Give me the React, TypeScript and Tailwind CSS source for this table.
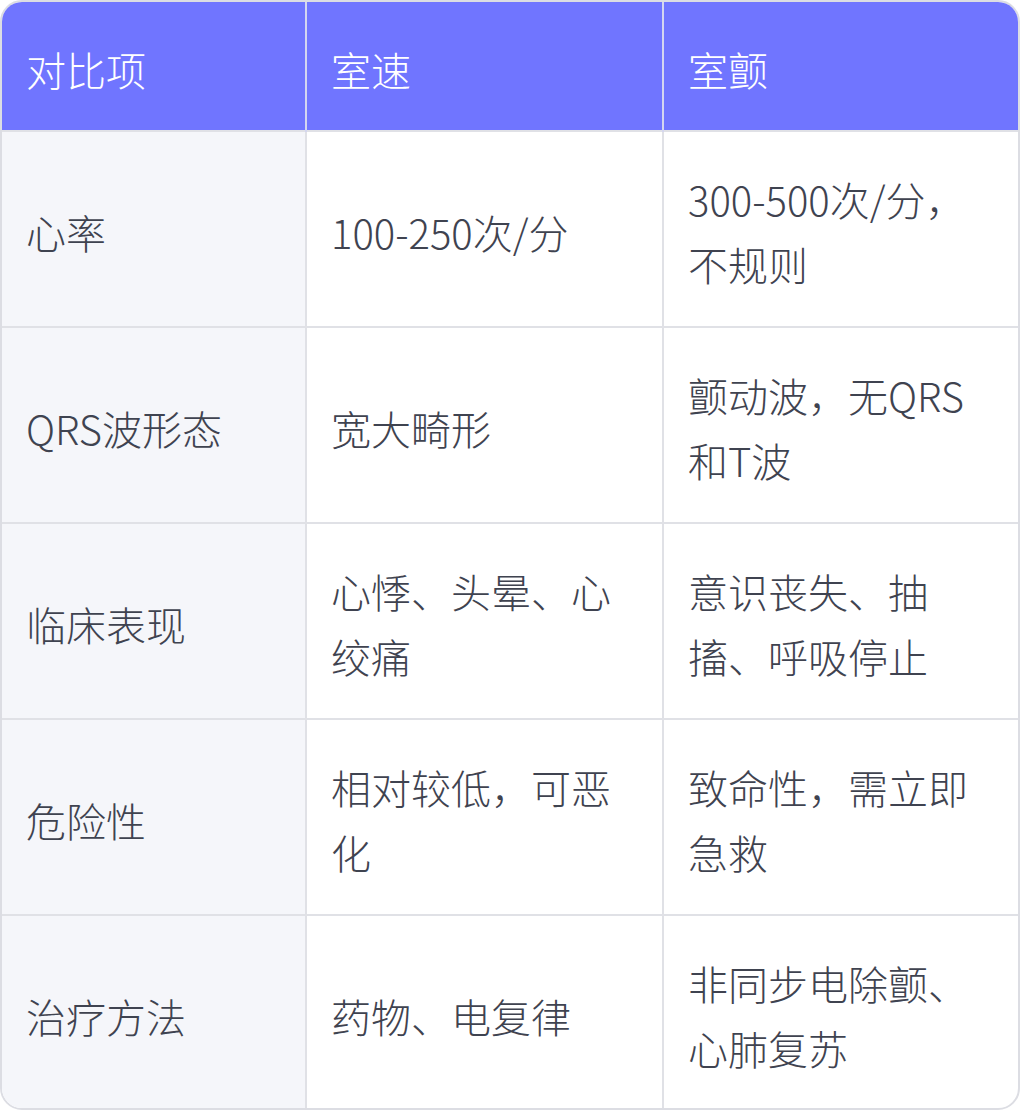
import React from 'react';

const rows: [string, string, string][] = [
  ['心率', '100-250次/分', '300-500次/分，不规则'],
  ['QRS波形态', '宽大畸形', '颤动波，无QRS和T波'],
  ['临床表现', '心悸、头晕、心绞痛', '意识丧失、抽搐、呼吸停止'],
  ['危险性', '相对较低，可恶化', '致命性，需立即急救'],
  ['治疗方法', '药物、电复律', '非同步电除颤、心肺复苏'],
];

const App: React.FC = () => {
  return (
    <div className="w-[1020px] h-[1110px] bg-white" style={{ fontFamily: '"Noto Sans CJK SC", "Noto Sans", sans-serif' }}>
      <div className="w-full h-full rounded-[22px] border-2 border-[#dcdde3] overflow-hidden">
        <table className="w-full h-full table-fixed border-collapse text-[40px] leading-[65px] font-light">
          <colgroup>
            <col className="w-[304px]" />
            <col className="w-[357px]" />
            <col />
          </colgroup>
          <thead>
            <tr className="bg-[#7075ff] text-white h-[129px]">
              <th className="text-left font-light pl-[24px] pr-[26px] pt-[6px] border-r-2 border-[#d4d6f0]">对比项</th>
              <th className="text-left font-light pl-[24px] pr-[26px] pt-[6px] border-r-2 border-[#d4d6f0]">室速</th>
              <th className="text-left font-light pl-[24px] pr-[26px] pt-[6px]">室颤</th>
            </tr>
          </thead>
          <tbody className="text-[#3f4350]">
            {rows.map((r, i) => (
              <tr key={i} className="h-[195px]">
                <td className="bg-[#f5f6fa] pl-[24px] pr-[26px] pt-[35px] pb-[29px] border-r-2 border-t-2 border-[#e0e1e6] align-middle">{r[0]}</td>
                <td className="pl-[24px] pr-[26px] pt-[35px] pb-[29px] border-r-2 border-t-2 border-[#e0e1e6] align-middle">{r[1]}</td>
                <td className="pl-[24px] pr-[26px] pt-[35px] pb-[29px] border-t-2 border-[#e0e1e6] align-middle">{r[2]}</td>
              </tr>
            ))}
          </tbody>
        </table>
      </div>
    </div>
  );
};

export default App;
